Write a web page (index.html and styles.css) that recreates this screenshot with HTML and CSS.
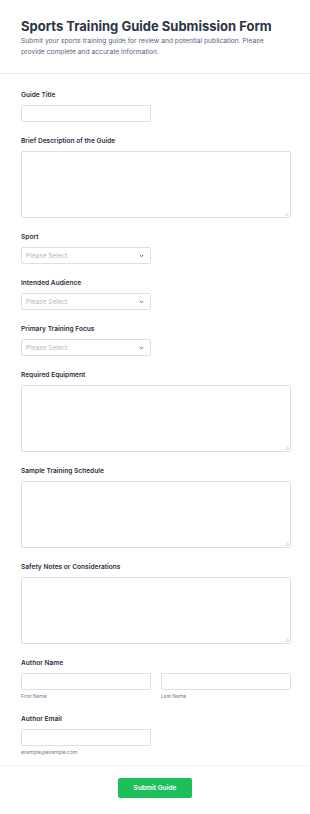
FILE: index.html
```html
<!DOCTYPE html>
<html lang="en">
<head>
    <meta charset="UTF-8">
    <meta name="viewport" content="width=device-width, initial-scale=1.0">
    <title>Sports Training Guide Submission Form</title>
    <link rel="stylesheet" href="styles.css">
</head>
<body>
    <form class="form">
        <div class="header">
            <h1>Sports Training Guide Submission Form</h1>
            <p>Submit your sports training guide for review and potential publication. Please provide complete and accurate information.</p>
        </div>

        <div class="fields">
            <div class="field">
                <label>Guide Title</label>
                <input type="text" class="input half">
            </div>

            <div class="field">
                <label>Brief Description of the Guide</label>
                <textarea class="textarea"></textarea>
            </div>

            <div class="field">
                <label>Sport</label>
                <div class="select half">
                    <span>Please Select</span>
                    <svg width="5" height="4" viewBox="0 0 5 4"><path d="M0.8 1l1.7 1.7 1.7-1.7" fill="none" stroke="#4a5468" stroke-width="0.9"/></svg>
                </div>
            </div>

            <div class="field">
                <label>Intended Audience</label>
                <div class="select half">
                    <span>Please Select</span>
                    <svg width="5" height="4" viewBox="0 0 5 4"><path d="M0.8 1l1.7 1.7 1.7-1.7" fill="none" stroke="#4a5468" stroke-width="0.9"/></svg>
                </div>
            </div>

            <div class="field">
                <label>Primary Training Focus</label>
                <div class="select half">
                    <span>Please Select</span>
                    <svg width="5" height="4" viewBox="0 0 5 4"><path d="M0.8 1l1.7 1.7 1.7-1.7" fill="none" stroke="#4a5468" stroke-width="0.9"/></svg>
                </div>
            </div>

            <div class="field">
                <label>Required Equipment</label>
                <textarea class="textarea"></textarea>
            </div>

            <div class="field">
                <label>Sample Training Schedule</label>
                <textarea class="textarea"></textarea>
            </div>

            <div class="field">
                <label>Safety Notes or Considerations</label>
                <textarea class="textarea"></textarea>
            </div>

            <div class="field">
                <label>Author Name</label>
                <div class="name-row">
                    <div>
                        <input type="text" class="input">
                        <span class="sublabel">First Name</span>
                    </div>
                    <div>
                        <input type="text" class="input">
                        <span class="sublabel">Last Name</span>
                    </div>
                </div>
            </div>

            <div class="field">
                <label>Author Email</label>
                <input type="email" class="input half">
                <span class="sublabel">example@example.com</span>
            </div>
        </div>

        <div class="footer">
            <button type="button" class="button">Submit Guide</button>
        </div>
    </form>
</body>
</html>
```

FILE: styles.css
```css
body {
    font-family: Inter, "Noto Sans", sans-serif;
    background: #fff;
    color: #2c3345;
    margin: 0;
}
.form {
    width: 310px;
}
.header {
    padding: 17px 21px 16px;
    border-bottom: 1px solid #e9ebf0;
}
.header h1 {
    font-size: 13px;
    font-weight: 700;
    line-height: 18px;
    margin: 0 0 1px;
}
.header p {
    font-size: 6.7px;
    line-height: 10.5px;
    color: #57647e;
    margin: 0;
    max-width: 255px;
}
.fields {
    padding: 16px 19px 9px 21px;
    border-bottom: 1px solid #f1f2f5;
}
.field {
    margin-bottom: 14px;
}
.field:last-child {
    margin-bottom: 0;
}
.field label {
    display: block;
    font-size: 6.6px;
    font-weight: 600;
    line-height: 10px;
    margin-bottom: 5px;
}
.input,
.textarea,
.select {
    box-sizing: border-box;
    width: 100%;
    border: 1px solid #dcdfe6;
    border-radius: 2px;
    background: #fff;
    font-family: inherit;
    display: block;
    margin: 0;
}
.input {
    height: 17px;
}
.half {
    width: 130px;
}
.textarea {
    height: 67px;
    resize: none;
    background: linear-gradient(135deg, transparent 50%, #d3d7df 50%, #d3d7df 57%, transparent 57%, transparent 72%, #d3d7df 72%, #d3d7df 79%, transparent 79%) no-repeat right 1px bottom 1px / 4px 4px, #fff;
}
.select {
    height: 17px;
    display: flex;
    align-items: center;
    justify-content: space-between;
    padding: 0 6px 0 4px;
    font-size: 6.5px;
    color: #b1b7c3;
}
.name-row {
    display: grid;
    grid-template-columns: 1fr 1fr;
    gap: 10px;
}
.sublabel {
    display: block;
    font-size: 5px;
    color: #6f7a91;
    margin-top: 3px;
    line-height: 7px;
}
.footer {
    display: flex;
    justify-content: center;
    padding: 12px 0 17px;
}
.button {
    background: #1dbf5b;
    color: #fff;
    border: none;
    border-radius: 2px;
    width: 74px;
    height: 20px;
    font-family: inherit;
    font-size: 6.6px;
    font-weight: 600;
    cursor: pointer;
}
```
